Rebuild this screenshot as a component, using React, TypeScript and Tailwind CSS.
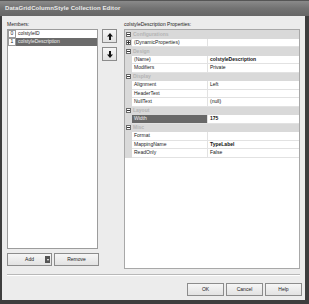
// DataGridColumnStyle Collection Editor - designer dialog

import React from 'react';

type Row =
  | { kind: 'cat'; label: string }
  | { kind: 'prop'; name: string; value: string; bold?: boolean; expand?: boolean; selected?: boolean };

const rows: Row[] = [
  { kind: 'cat', label: 'Configurations' },
  { kind: 'prop', name: '(DynamicProperties)', value: '', expand: true },
  { kind: 'cat', label: 'Design' },
  { kind: 'prop', name: '(Name)', value: 'colstyleDescription', bold: true },
  { kind: 'prop', name: 'Modifiers', value: 'Private' },
  { kind: 'cat', label: 'Display' },
  { kind: 'prop', name: 'Alignment', value: 'Left' },
  { kind: 'prop', name: 'HeaderText', value: '' },
  { kind: 'prop', name: 'NullText', value: '(null)' },
  { kind: 'cat', label: 'Layout' },
  { kind: 'prop', name: 'Width', value: '175', bold: true, selected: true },
  { kind: 'cat', label: 'Misc' },
  { kind: 'prop', name: 'Format', value: '' },
  { kind: 'prop', name: 'MappingName', value: 'TypeLabel', bold: true },
  { kind: 'prop', name: 'ReadOnly', value: 'False' },
];

function ToggleBox({ plus }: { plus?: boolean }) {
  return (
    <span className="relative flex h-[5px] w-[5px] items-center justify-center border border-[#6a6a6a] bg-white">
      <span className="h-[1px] w-[3px] bg-[#333]" />
      {plus && <span className="absolute h-[3px] w-[1px] bg-[#333]" />}
    </span>
  );
}

function Arrow({ down }: { down?: boolean }) {
  return (
    <svg width="6" height="7" viewBox="0 0 6 7" className={down ? 'rotate-180' : ''}>
      <path d="M3 0 L6 3.5 H4 V7 H2 V3.5 H0 Z" fill="#111" />
    </svg>
  );
}

function Button({ children, className = '' }: { children: React.ReactNode; className?: string }) {
  return (
    <div
      className={`flex h-[13px] items-center justify-center border border-[#8c8c8c] bg-gradient-to-b from-[#f6f6f6] to-[#e2e2e2] text-[5px] text-[#222] ${className}`}
    >
      {children}
    </div>
  );
}

export default function App() {
  return (
    <div className="flex h-[304px] w-[309px] flex-col bg-[#3e3e3e] font-['Liberation_Sans',Arial,sans-serif]">
      {/* Title bar */}
      <div className="flex h-[16px] shrink-0 items-center border-t border-[#555] bg-gradient-to-b from-[#8a8a8a] via-[#727272] to-[#666] pl-[5px]">
        <span className="text-[6px] font-bold tracking-[0.1px] text-[#ececec]">
          DataGridColumnStyle Collection Editor
        </span>
      </div>

      {/* Body */}
      <div className="ml-[2px] mr-[4px] mb-[4px] flex flex-1 flex-col bg-[#ececec]">
        <div className="flex px-[5px] pt-[4px]">
          {/* Members */}
          <div className="flex w-[110px] flex-col">
            <div className="flex h-[9px] items-center text-[5px] text-[#222]">Members:</div>
            <div className="flex">
              <div className="h-[220px] w-[91px] border border-[#9c9c9c] bg-white">
                {[
                  { i: '0', name: 'colstyleID' },
                  { i: '1', name: 'colstyleDescription', selected: true },
                ].map((m) => (
                  <div key={m.i} className="flex h-[8px] items-center">
                    <span className="flex h-[8px] w-[8px] items-center justify-center border border-[#9a9a9a] text-[5px] text-[#222]">
                      {m.i}
                    </span>
                    <span
                      className={`flex h-[8px] flex-1 items-center pl-[2px] text-[5px] ${
                        m.selected ? 'bg-[#6b6b6b] text-[#f0f0f0]' : 'text-[#222]'
                      }`}
                    >
                      {m.name}
                    </span>
                  </div>
                ))}
              </div>
              <div className="ml-[4px] flex flex-col gap-[4px]">
                <Button className="h-[14px] w-[15px]">
                  <Arrow />
                </Button>
                <Button className="h-[14px] w-[15px]">
                  <Arrow down />
                </Button>
              </div>
            </div>
            <div className="mt-[4px] flex gap-[2px]">
              <Button className="relative w-[45px]">
                Add
                <span className="absolute right-[1px] top-[2px] flex h-[7px] w-[5px] items-center justify-center bg-[#555]">
                  <span className="h-0 w-0 border-x-[1.5px] border-t-[2px] border-x-transparent border-t-white" />
                </span>
              </Button>
              <Button className="w-[45px]">Remove</Button>
            </div>
          </div>

          {/* Properties */}
          <div className="ml-[7px] flex w-[178px] flex-col">
            <div className="flex h-[9px] items-center text-[5px] text-[#222]">
              colstyleDescription Properties:
            </div>
            <div className="flex h-[240px] flex-col border border-[#a8a8a8] bg-white">
              {rows.map((r, idx) =>
                r.kind === 'cat' ? (
                  <div key={idx} className="flex h-[8.5px] items-center bg-[#d9d9d9]">
                    <span className="flex w-[7px] justify-center">
                      <ToggleBox />
                    </span>
                    <span className="pl-[1px] text-[5px] font-bold text-[#b4b4b4]">{r.label}</span>
                  </div>
                ) : (
                  <div key={idx} className="flex h-[8.5px]">
                    <span className="flex w-[7px] items-center justify-center bg-[#d9d9d9]">
                      {r.expand && <ToggleBox plus />}
                    </span>
                    <span
                      className={`flex w-[76px] items-center border-b border-r border-[#e2e2e2] pl-[2px] text-[5px] ${
                        r.selected ? 'bg-[#686868] text-[#f0f0f0]' : 'text-[#222]'
                      }`}
                    >
                      {r.name}
                    </span>
                    <span
                      className={`flex flex-1 items-center border-b border-[#e2e2e2] pl-[2px] text-[5px] text-[#111] ${
                        r.bold ? 'font-bold' : ''
                      }`}
                    >
                      {r.value}
                    </span>
                  </div>
                )
              )}
            </div>
          </div>
        </div>

        {/* Separator */}
        <div className="mx-[5px] mt-[5px] h-[2px] border-t border-b border-t-[#b8b8b8] border-b-white" />

        {/* Dialog buttons */}
        <div className="mt-[7px] flex justify-end gap-[2px] pr-[3px]">
          <Button className="w-[37px]">OK</Button>
          <Button className="w-[37px]">Cancel</Button>
          <Button className="w-[37px]">Help</Button>
        </div>
      </div>
    </div>
  );
}
